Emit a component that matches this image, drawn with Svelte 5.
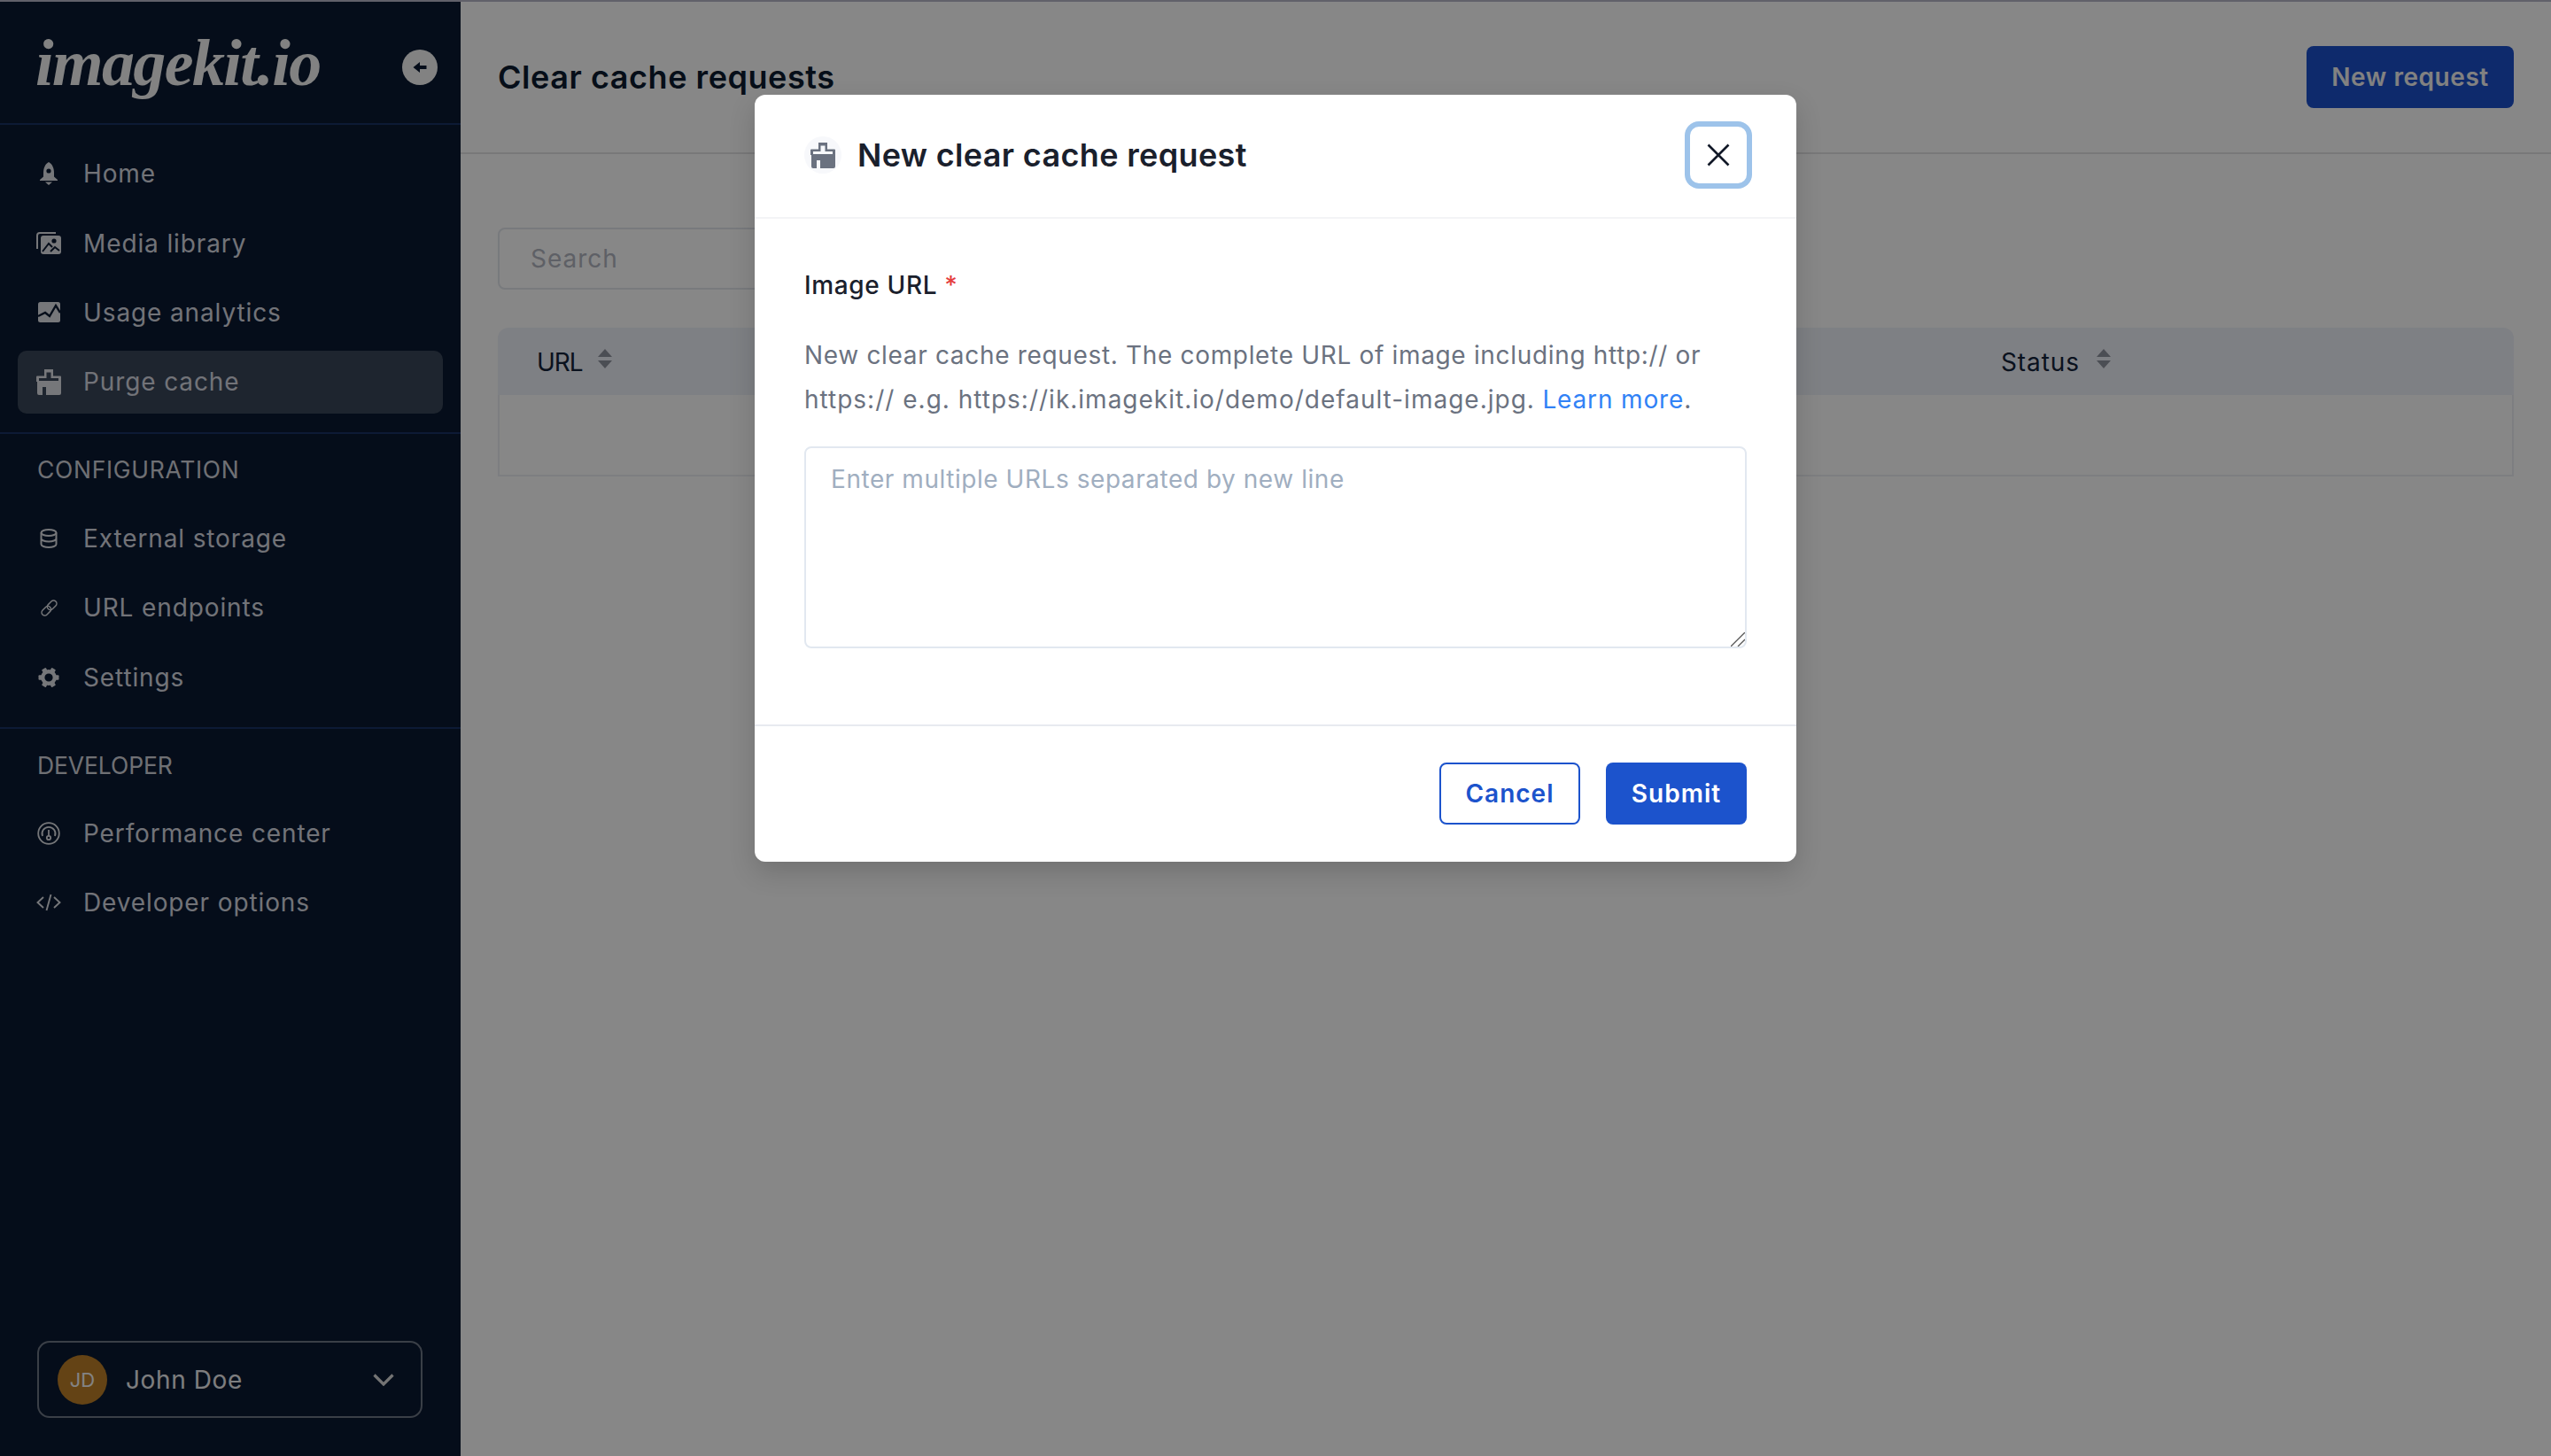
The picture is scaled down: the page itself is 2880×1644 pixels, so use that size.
<script>
  const primary = [
    { icon: 'bell', label: 'Home' },
    { icon: 'media', label: 'Media library' },
    { icon: 'chart', label: 'Usage analytics' },
    { icon: 'brush', label: 'Purge cache', active: true }
  ];
  const config = [
    { icon: 'db', label: 'External storage' },
    { icon: 'link', label: 'URL endpoints' },
    { icon: 'gear', label: 'Settings' }
  ];
  const developer = [
    { icon: 'gauge', label: 'Performance center' },
    { icon: 'code', label: 'Developer options' }
  ];
  const teeth = [0, 60, 120, 180, 240, 300];
</script>

{#snippet brush()}
  <svg class="brush" width="28" height="29" viewBox="0 0 28 29"><path fill="currentColor" fill-rule="evenodd" d="M9 0H19V7.5H27a1 1 0 0 1 1 1V27a2 2 0 0 1-2 2H11V20H7V29H3a2 2 0 0 1-2-2V14H0V8.5a1 1 0 0 1 1-1H9ZM11.5 3.5H16.5V10H25V13H3V10H11.5Z"/></svg>
{/snippet}

{#snippet icon(name)}
  {#if name === 'bell'}
    <svg width="20" height="26" viewBox="0 0 20 26"><path fill="currentColor" fill-rule="evenodd" d="M10 0C14 2 16 7 16 12V16.500L20 20V21H0V20L4 16.500V12C4 7 6 2 10 0ZM10 7.400a2.600 2.600 0 1 0 0 5.200a2.600 2.600 0 0 0 0-5.200ZM6 22.500H14L10 26Z"/></svg>
  {:else if name === 'media'}
    <svg width="28" height="25" viewBox="0 0 28 25"><path d="M1 19V4a3 3 0 0 1 3-3H22" fill="none" stroke="currentColor" stroke-width="2"/><rect x="5" y="4" width="23" height="21" rx="3" fill="currentColor"/><circle cx="20" cy="10" r="2.600" fill="#0b1a31"/><path d="M7 22L14 13L18 17M16 22L21 17L26 21" fill="none" stroke="#0b1a31" stroke-width="2"/></svg>
  {:else if name === 'chart'}
    <svg width="25" height="23" viewBox="0 0 25 23"><rect width="25" height="23" rx="2.500" fill="currentColor"/><path d="M0 16L8 12L13 16L20 4L25 12" fill="none" stroke="#0b1a31" stroke-width="2.400"/></svg>
  {:else if name === 'brush'}
    {@render brush()}
  {:else if name === 'db'}
    <svg width="20" height="22" viewBox="0 0 20 22" fill="none" stroke="currentColor" stroke-width="2"><ellipse cx="10" cy="4.500" rx="8.500" ry="3.500"/><path d="M1.500 4.500V17.500C1.500 19.500 5.500 21 10 21S18.500 19.500 18.500 17.500V4.500M1.500 11C1.500 13 5.500 14.500 10 14.500S18.500 13 18.500 11"/></svg>
  {:else if name === 'link'}
    <svg width="21" height="21" viewBox="0 0 21 21" fill="none" stroke="currentColor" stroke-width="1.500"><g transform="rotate(-45 10.500 10.500)"><rect x="0" y="7" width="12" height="7" rx="3.500"/><rect x="9" y="7" width="12" height="7" rx="3.500"/></g></svg>
  {:else if name === 'gear'}
    <svg width="24" height="24" viewBox="0 0 24 24"><circle cx="12" cy="12" r="6.800" fill="none" stroke="currentColor" stroke-width="4.400"/>{#each teeth as a}<rect x="9.300" y="0.500" width="5.400" height="5" rx="1" fill="currentColor" transform="rotate({a + 30} 12 12)"/>{/each}</svg>
  {:else if name === 'gauge'}
    <svg width="26" height="26" viewBox="0 0 26 26" fill="none" stroke="currentColor" stroke-width="1.800"><circle cx="13" cy="13" r="11.800"/><path d="M6 16a7.500 7.500 0 1 1 14 0"/><circle cx="13" cy="18" r="2.200"/><path d="M13 15.800V9"/></svg>
  {:else if name === 'code'}
    <svg width="28" height="20" viewBox="0 0 28 20" fill="none" stroke="currentColor" stroke-width="1.900"><path d="M8 4L1.500 10L8 16M20 4L26.500 10L20 16M16.500 1L11.500 19"/></svg>
  {/if}
{/snippet}

{#snippet navlist(items)}
  <ul class="nav-list">
    {#each items as item}
      <li class="nav-item" class:active={item.active}>
        <span class="nav-icon">{@render icon(item.icon)}</span>
        <span>{item.label}</span>
      </li>
    {/each}
  </ul>
{/snippet}

{#snippet sorter()}
  <svg class="sorter" width="16" height="22" viewBox="0 0 16 22"><path fill="currentColor" d="M8 0L16 9H0ZM0 13H16L8 22Z"/></svg>
{/snippet}

<div class="page">
  <div class="topline"></div>
  <div class="shell">
    <aside class="sidebar">
      <div class="brand">
        <span class="logo">imagekit.io</span>
        <span class="collapse">
          <svg width="40" height="40" viewBox="0 0 40 40"><circle cx="20" cy="20" r="20" fill="#f6f6f6"/><path fill="#0b1a31" d="M12.500 20L20 14V18H27.500V22H20V26Z"/></svg>
        </span>
      </div>
      <section class="group first">{@render navlist(primary)}</section>
      <section class="group">
        <h2 class="wide">CONFIGURATION</h2>
        {@render navlist(config)}
      </section>
      <section class="group last">
        <h2>DEVELOPER</h2>
        {@render navlist(developer)}
      </section>
      <div class="user">
        <span class="avatar">JD</span>
        <span class="user-name">John Doe</span>
        <svg class="chevron" width="24" height="14" viewBox="0 0 24 14" fill="none" stroke="currentColor" stroke-width="3.200"><path d="M1.500 1.500L12 12L22.500 1.500"/></svg>
      </div>
    </aside>

    <main class="main">
      <header class="main-head">
        <h1>Clear cache requests</h1>
        <button class="btn-new">New request</button>
      </header>
      <div class="content">
        <div class="search">Search</div>
        <div class="table">
          <div class="thead">
            <div class="th url">URL {@render sorter()}</div>
            <div class="th status">Status {@render sorter()}</div>
          </div>
          <div class="tbody"></div>
        </div>
      </div>
    </main>
  </div>

  <div class="overlay">
    <div class="modal">
      <div class="modal-head">
        <span class="modal-icon">{@render brush()}</span>
        <h3>New clear cache request</h3>
        <button class="close" aria-label="Close">
          <svg width="26" height="26" viewBox="0 0 26 26" fill="none" stroke="#111827" stroke-width="2.600"><path d="M1.500 1.500L24.500 24.500M24.500 1.500L1.500 24.500"/></svg>
        </button>
      </div>
      <div class="modal-body">
        <label class="field-label" for="urls">Image URL <span class="req">*</span></label>
        <p class="help">New clear cache request. The complete URL of image including http:// or <span class="line-two">https:// e.g. https://ik.imagekit.io/demo/default-image.jpg.</span> <a href="#learn">Learn more</a>.</p>
        <div class="area">
          <textarea id="urls" placeholder="Enter multiple URLs separated by new line"></textarea>
          <svg class="grip" width="16" height="16" viewBox="0 0 16 16" fill="none" stroke="#555" stroke-width="1.300"><path d="M0 16L16 0M8 16L16 8"/></svg>
        </div>
      </div>
      <div class="modal-foot">
        <button class="btn outline">Cancel</button>
        <button class="btn solid">Submit</button>
      </div>
    </div>
  </div>
</div>

<style>
  :global(body) { margin: 0; background: #fff; }
  :global(*) { box-sizing: border-box; }
  .page { width: 2880px; height: 1644px; overflow: hidden; position: relative; font-family: Inter, "Noto Sans", sans-serif; font-size: 28px; display: flex; flex-direction: column; }
  .topline { height: 2px; background: #b8b8c8; flex: none; }
  .shell { flex: 1; display: flex; min-height: 0; }
  .sidebar { width: 520px; flex: none; background: #0b1a31; color: #d7dae2; display: flex; flex-direction: column; }
  .brand { height: 139px; flex: none; display: flex; align-items: center; justify-content: space-between; padding: 11px 26px 0 40px; border-bottom: 2px solid #193264; }
  .logo { font-family: "Liberation Serif", serif; font-style: italic; font-weight: 700; font-size: 74px; line-height: 1; letter-spacing: -1.6px; color: #f6f6f6; margin-top: -10px; }
  .collapse { display: flex; height: 40px; }
  .group { padding: 20px 20px 21px; border-bottom: 2px solid #193264; }
  .group.last { border-bottom: 0; flex: 1; }
  .group h2 { margin: 0 0 21px; padding-left: 22px; font-size: 26.500px; line-height: 42px; font-weight: 400; color: #d1d3dc; letter-spacing: -0.1px; }
  .group h2.wide { letter-spacing: 0.7px; margin-top: -1px; margin-bottom: 22px; }
  .nav-list { list-style: none; margin: 0; padding: 0; display: flex; flex-direction: column; gap: 8px; }
  .nav-item { height: 70.400px; display: flex; align-items: center; border-radius: 10px; letter-spacing: 0.88px; }
  .nav-item.active { background: #3a4659; }
  .nav-icon { width: 70px; flex: none; display: flex; justify-content: center; margin-right: 4px; color: #dfe0e6; }
  .user { margin: 0 43px 43px 42px; height: 87px; flex: none; border: 2px solid #6e7786; border-radius: 14px; display: flex; align-items: center; padding: 0 30px 0 21px; color: #ecedf0; }
  .avatar { width: 56px; height: 56px; border-radius: 50%; background: #bd7f28; display: flex; align-items: center; justify-content: center; font-size: 22px; color: #f8f8f8; flex: none; }
  .user-name { margin-left: 21px; flex: 1; letter-spacing: 0.6px; }
  .chevron { color: #dcdcdc; flex: none; }

  .main { flex: 1; min-width: 0; background: #fff; color: #0f1d30; }
  .main-head { height: 172px; padding: 0 42px; border-bottom: 2px solid #e2e2e4; display: flex; align-items: center; justify-content: space-between; }
  h1 { margin: 0; font-size: 36px; font-weight: 600; letter-spacing: 0.55px; color: #0c1b30; }
  .btn-new { width: 234px; height: 70px; border: 0; border-radius: 8px; background: #1b50cc; color: #f4f4f4; font: 600 28px Inter, sans-serif; letter-spacing: 0.55px; padding: 0; }
  .content { padding: 83px 42px 0; }
  .search { width: 700px; height: 70px; border: 2px solid #e2e6ec; border-radius: 8px; padding-left: 35px; display: flex; align-items: center; color: #b2b5c0; letter-spacing: 1px; }
  .table { margin-top: 43px; }
  .thead { height: 76px; background: #eff1f9; border-radius: 12px 12px 0 0; display: grid; grid-template-columns: 1653px 1fr; padding-left: 44px; align-items: center; }
  .th { display: flex; align-items: center; color: #13233a; gap: 18px; padding-top: 2px; }
  .th.url { letter-spacing: -1px; gap: 17px; }
  .th.status { letter-spacing: 0.9px; gap: 19px; }
  .sorter { color: #8f949f; margin-top: -8px; }
  .tbody { height: 92px; border: 2px solid #eceef4; border-top: 0; }

  .overlay { position: absolute; inset: 0; background: rgba(0, 0, 0, 0.47); display: flex; justify-content: center; align-items: flex-start; padding-top: 107px; }
  .modal { width: 1176px; height: 866px; background: #fff; border-radius: 12px; box-shadow: 0 12px 30px rgba(0, 0, 0, 0.16); display: flex; flex-direction: column; }
  .modal-head { height: 140px; flex: none; border-bottom: 2px solid #f3f4f6; display: flex; align-items: center; padding: 0 56px 2px 56px; }
  .modal-icon { width: 42px; height: 42px; border-radius: 50%; background: #f7f8fb; display: flex; align-items: center; justify-content: center; color: #6b7280; flex: none; }
  h3 { margin: -1px 0 0 18px; flex: 1; font-size: 36px; font-weight: 600; color: #1a202c; letter-spacing: 0.34px; }
  .close { width: 64px; height: 64px; border: 0; background: #fff; border-radius: 10px; box-shadow: 0 0 0 6px #9dc3ea; display: flex; align-items: center; justify-content: center; padding: 0; }
  .modal-body { flex: 1; padding: 55px 56px 0; display: flex; flex-direction: column; }
  .field-label { line-height: 40px; font-weight: 500; color: #1a202c; letter-spacing: 0.65px; }
  .req { color: #e53e3e; }
  .help { margin: 34px 0 27px; line-height: 50.400px; color: #6b7280; letter-spacing: 0.67px; }
  .line-two { letter-spacing: 1px; }
  .help a { color: #3182f6; text-decoration: none; letter-spacing: 0.85px; }
  .area { position: relative; height: 228px; }
  textarea { width: 1064px; height: 228px; border: 2px solid #e2e8f0; border-radius: 8px; padding: 14px 28px; font: 28px/42px Inter, sans-serif; letter-spacing: 0.55px; outline: none; display: block; resize: none; }
  textarea::placeholder { color: #a0aec0; opacity: 1; }
  .grip { position: absolute; right: 2px; bottom: 2px; }
  .modal-foot { height: 155px; flex: none; border-top: 2px solid #e8eaf0; display: flex; justify-content: flex-end; gap: 29px; padding: 41px 56px 0 0; }
  .btn { width: 159px; height: 70px; border-radius: 8px; font: 600 28px Inter, sans-serif; padding: 0; letter-spacing: 1px; }
  .btn.outline { background: #fff; border: 2px solid #1c53cc; color: #1c53cc; }
  .btn.solid { background: #1c53cc; border: 0; color: #fff; }
</style>
